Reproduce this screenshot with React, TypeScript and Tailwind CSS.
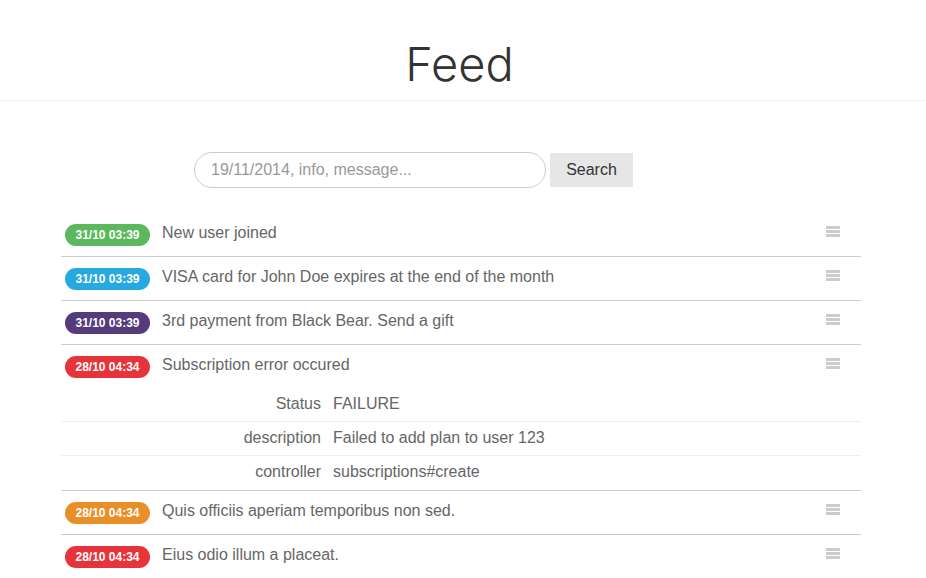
import { Fragment } from "react";

type Entry = {
  time: string;
  color: string;
  text: string;
  details?: [string, string][];
};

const entries: Entry[] = [
  { time: "31/10 03:39", color: "bg-[#5cb85c]", text: "New user joined" },
  { time: "31/10 03:39", color: "bg-[#25a9e0]", text: "VISA card for John Doe expires at the end of the month" },
  { time: "31/10 03:39", color: "bg-[#553b7b]", text: "3rd payment from Black Bear. Send a gift" },
  {
    time: "28/10 04:34",
    color: "bg-[#e6343a]",
    text: "Subscription error occured",
    details: [
      ["Status", "FAILURE"],
      ["description", "Failed to add plan to user 123"],
      ["controller", "subscriptions#create"],
    ],
  },
  { time: "28/10 04:34", color: "bg-[#e88f28]", text: "Quis officiis aperiam temporibus non sed." },
  { time: "28/10 04:34", color: "bg-[#e6343a]", text: "Eius odio illum a placeat." },
];

function Handle() {
  return (
    <div className="mt-[13px] flex w-[14px] flex-col gap-px">
      <span className="h-[3px] bg-[#cccccc]" />
      <span className="h-[3px] bg-[#cccccc]" />
      <span className="h-[3px] bg-[#cccccc]" />
    </div>
  );
}

export default function App() {
  return (
    <div className="min-h-screen bg-white font-['Liberation_Sans',Arial,sans-serif] text-[#666]">
      {/* Header */}
      <header className="h-[101px] border-b border-[#eeeeee] pr-[7px] pt-[40px] text-center">
        <h1 className="font-['Inter',sans-serif] text-[47px] font-light leading-[47px] text-[#333]">Feed</h1>
      </header>

      <div className="ml-[61px] w-[800px]">
        {/* Search */}
        <form className="ml-[133px] mt-[51px] flex items-center gap-1" onSubmit={(e) => e.preventDefault()}>
          <input
            type="text"
            placeholder="19/11/2014, info, message..."
            className="h-[36px] w-[352px] rounded-full border border-[#cccccc] px-[16px] text-[16px] text-[#555] placeholder:text-[#999] focus:outline-none"
          />
          <button type="submit" className="h-[34px] w-[83px] bg-[#e6e6e6] text-[16px] text-[#333]">
            Search
          </button>
        </form>

        {/* Feed list */}
        <ul className="mt-[25px]">
          {entries.map((e, i) => (
            <li key={i} className="border-b border-[#cccccc]">
              <div className="flex h-[43px] items-start pl-[4px] pr-[21px]">
                <span
                  className={`${e.color} mt-[11px] flex h-[22px] w-[85px] shrink-0 items-center justify-center rounded-full text-[12px] font-bold text-white`}
                >
                  {e.time}
                </span>
                <span className="ml-[12px] mt-[9px] flex-1 text-[16px] leading-[22px]">{e.text}</span>
                <Handle />
              </div>
              {e.details && (
                <div>
                  {e.details.map(([k, v], j) => (
                    <Fragment key={k}>
                      <div
                        className={`flex h-[34px] items-center pb-[2px] text-[16px] ${
                          j < e.details!.length - 1 ? "border-b border-[#eeeeee]" : ""
                        }`}
                      >
                        <span className="w-[260px] text-right">{k}</span>
                        <span className="ml-[12px]">{v}</span>
                      </div>
                    </Fragment>
                  ))}
                </div>
              )}
            </li>
          ))}
        </ul>
      </div>
    </div>
  );
}
